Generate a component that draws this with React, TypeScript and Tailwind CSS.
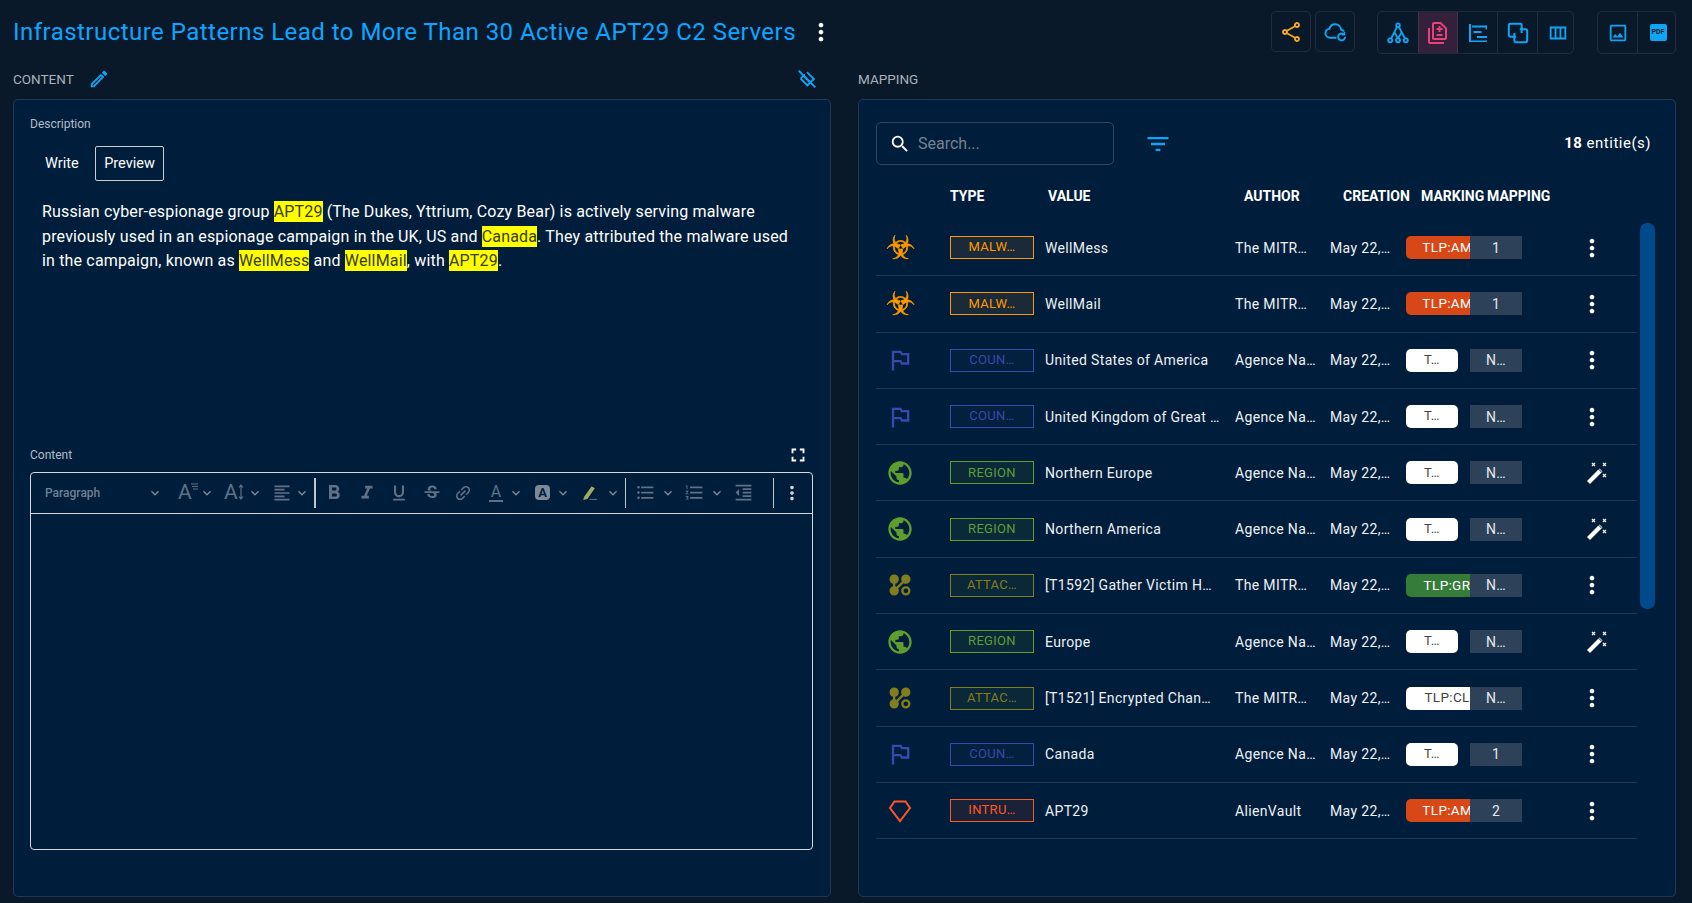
import React from "react";
import {
  MdMoreVert, MdOutlineShare, MdOutlineDifference, MdOutlineViewColumn,
  MdOutlineImage, MdOutlineEdit, MdFullscreen, MdSearch, MdFilterList, MdPublic,
  MdOutlinedFlag, MdKeyboardArrowDown, MdFormatBold, MdFormatItalic, MdFormatUnderlined, MdStrikethroughS,
  MdLink, MdFormatListBulleted, MdFormatListNumbered, MdFormatIndentDecrease, MdFormatAlignLeft,
} from "react-icons/md";
import { GiBiohazard } from "react-icons/gi";

const LockPattern = ({ className }: { className?: string }) => (
  <svg viewBox="0 0 24 24" width="28" height="28" fill="currentColor" className={className}>
    <path d="M7,3A4,4 0 0,1 11,7C11,8.86 9.73,10.43 8,10.87V13.13C8.37,13.22 8.72,13.37 9.04,13.56L13.56,9.04C13.2,8.44 13,7.75 13,7A4,4 0 0,1 17,3A4,4 0 0,1 21,7A4,4 0 0,1 17,11C16.26,11 15.57,10.8 15,10.45L10.45,15C10.8,15.57 11,16.26 11,17A4,4 0 0,1 7,21A4,4 0 0,1 3,17C3,15.14 4.27,13.57 6,13.13V10.87C4.27,10.43 3,8.86 3,7A4,4 0 0,1 7,3M17,13A4,4 0 0,1 21,17A4,4 0 0,1 17,21A4,4 0 0,1 13,17A4,4 0 0,1 17,13M17,15A2,2 0 0,0 15,17A2,2 0 0,0 17,19A2,2 0 0,0 19,17A2,2 0 0,0 17,15Z" />
  </svg>
);
const Gem = ({ className }: { className?: string }) => (
  <svg viewBox="0 0 24 24" width="24" height="24" fill="none" stroke="currentColor" strokeWidth="2" className={className}>
    <path d="M6.5 2.5H17.5L22 9L12 22L2 9Z" />
  </svg>
);
const Wand = () => (
  <svg viewBox="0 0 24 24" width="24" height="24" fill="white" className="ml-[10px]">
    <path d="M2 21.5L14.5 9L17.5 12L5 24.5Z" transform="translate(0 -1.5)" />
    <path d="M14.5 7.5l3 3" stroke="#001e3c" strokeWidth="1" transform="translate(-1 .6)" />
    <g stroke="white" strokeWidth="1.2">
      <path d="M7 2l3 3M10 2l-3 3M18 2l3 3M21 2l-3 3M18 13l3 3M21 13l-3 3" />
    </g>
  </svg>
);
const GraphIcon = () => (
  <svg viewBox="0 0 24 24" width="22" height="22" fill="none" stroke="currentColor" strokeWidth="2">
    <circle cx="12" cy="3.5" r="2" /><circle cx="3.5" cy="20" r="2.2" /><circle cx="12" cy="20" r="2.2" /><circle cx="20.5" cy="20" r="2.2" />
    <path d="M11 5.3L4.5 18M13 5.3L19.5 18M8.2 11.5L12 18M15.8 11.5L12 18" />
  </svg>
);
const CloudRefresh = () => (
  <svg viewBox="0 0 24 24" width="23" height="23" fill="none" stroke="currentColor" strokeWidth="2">
    <path d="M13 18.5H6.5C3.5 18.5 1.5 16.4 1.5 13.8C1.5 11.4 3.4 9.6 5.6 9.3C6.4 6.4 8.8 4.5 11.6 4.5C15 4.5 17.6 6.9 18 10.2C19.2 10.4 20.4 11 21 12" />
    <path d="M22 17.6A3.6 3.6 0 1 1 20.6 14.8" />
    <path d="M21.4 12.6V15.4H18.6" strokeWidth="1.4" />
  </svg>
);
const LinkedSquares = () => (
  <svg viewBox="0 0 24 24" width="22" height="22" fill="none" stroke="currentColor" strokeWidth="2.2">
    <path d="M10 16H3.5A1.5 1.5 0 0 1 2 14.5V3.5A1.5 1.5 0 0 1 3.5 2H14.5A1.5 1.5 0 0 1 16 3.5V12" />
    <path d="M14 8H20.5A1.5 1.5 0 0 1 22 9.5V20.5A1.5 1.5 0 0 1 20.5 22H9.5A1.5 1.5 0 0 1 8 20.5V12" />
  </svg>
);
const AlignBars = () => (
  <svg viewBox="0 0 18 18" width="18" height="18" fill="currentColor">
    <rect x="0" y="0" width="2" height="18" />
    <rect x="0" y="16.5" width="18" height="1.5" />
    <rect x="3" y="1.5" width="15" height="2" />
    <rect x="16.5" y="1.5" width="1.5" height="4" />
    <rect x="4.5" y="7" width="8" height="2" />
    <rect x="8" y="12" width="10" height="2" />
  </svg>
);
const LayersOff = () => (
  <svg viewBox="0 0 24 24" width="22" height="22" fill="none" stroke="currentColor" strokeWidth="2">
    <path d="M3 3L21 21" />
    <path d="M12 4.5L19.5 12L16.5 15M9.5 7L8 8.5L15.5 16" />
    <path d="M5 11.5L12.5 19L15.5 16M8 8.5L5 11.5" />
  </svg>
);

const Btn = ({ children, className = "" }: { children: React.ReactNode; className?: string }) => (
  <div className={`flex h-[41px] w-[40px] shrink-0 items-center justify-center ${className}`}>{children}</div>
);

type Row = { k: string; type: string; value: string; author: string; marking: string; mapping: string; wand?: boolean };
const rows: Row[] = [
  { k: "mal", type: "MALW…", value: "WellMess", author: "The MITR…", marking: "amber", mapping: "1" },
  { k: "mal", type: "MALW…", value: "WellMail", author: "The MITR…", marking: "amber", mapping: "1" },
  { k: "cou", type: "COUN…", value: "United States of America", author: "Agence Na…", marking: "t", mapping: "N…" },
  { k: "cou", type: "COUN…", value: "United Kingdom of Great …", author: "Agence Na…", marking: "t", mapping: "N…" },
  { k: "reg", type: "REGION", value: "Northern Europe", author: "Agence Na…", marking: "t", mapping: "N…", wand: true },
  { k: "reg", type: "REGION", value: "Northern America", author: "Agence Na…", marking: "t", mapping: "N…", wand: true },
  { k: "att", type: "ATTAC…", value: "[T1592] Gather Victim H…", author: "The MITR…", marking: "green", mapping: "N…" },
  { k: "reg", type: "REGION", value: "Europe", author: "Agence Na…", marking: "t", mapping: "N…", wand: true },
  { k: "att", type: "ATTAC…", value: "[T1521] Encrypted Chan…", author: "The MITR…", marking: "clear", mapping: "N…" },
  { k: "cou", type: "COUN…", value: "Canada", author: "Agence Na…", marking: "t", mapping: "1" },
  { k: "int", type: "INTRU…", value: "APT29", author: "AlienVault", marking: "amber", mapping: "2" },
];

const chipClass: Record<string, string> = {
  mal: "border-[#ff9800] text-[#ff9800] bg-[#1a2a38]",
  cou: "border-[#3949ab] text-[#3949ab] bg-[#04203f]",
  reg: "border-[#5d9e2f] text-[#5d9e2f] bg-[#0a2a3a]",
  att: "border-[#827d1f] text-[#827d1f] bg-[#0b2838]",
  int: "border-[#ff5722] text-[#ff5722] bg-[#1a2238]",
};

const RowIcon = ({ k }: { k: string }) => {
  if (k === "mal") return <GiBiohazard size={29} stroke="currentColor" strokeWidth={14} className="text-[#ff9800]" />;
  if (k === "cou") return <MdOutlinedFlag size={28} className="text-[#3949ab]" />;
  if (k === "reg") return <MdPublic size={28} className="text-[#5d9e2f]" />;
  if (k === "att") return <LockPattern className="text-[#827d1f]" />;
  return <Gem className="text-[#ff5722]" />;
};

const Marking = ({ m }: { m: string }) => {
  if (m === "t")
    return <div className="flex h-[23px] w-[52px] items-center justify-center rounded-[5px] bg-white text-[13px] text-[#444]">T…</div>;
  const cfg: Record<string, [string, string]> = {
    amber: ["bg-[#d84716] text-white", "TLP:AMBER"],
    green: ["bg-[#367c39] text-white", "TLP:GREEN"],
    clear: ["bg-white text-[#444]", "TLP:CLEAR"],
  };
  const [c, t] = cfg[m];
  return <div className={`flex h-[23px] w-[108px] shrink-0 items-center justify-center rounded-[5px] text-[13.5px] whitespace-nowrap ${c}`}>{t}</div>;
};

const Chev = ({ className = "" }: { className?: string }) => <MdKeyboardArrowDown size={16} className={`shrink-0 text-[#7b8a9a] ${className}`} />;

const Toolbar = () => (
  <div className="flex h-[41px] items-center border-b border-[#d5d8dc] text-[#5f7186]">
    <span className="ml-[14px] w-[102px] text-xs font-medium text-[#6f8093]">Paragraph</span>
    <Chev />
    <span className="relative ml-[15px] w-[18px] text-[21px] leading-none">
      A
      <svg viewBox="0 0 8 8" width="8" height="8" className="absolute right-[-2px] top-[1px]" stroke="#5f7186" strokeWidth="1"><path d="M1 1H8M2 3.5H8M3 6H8" /></svg>
    </span>
    <Chev className="ml-[3px]" />
    <span className="relative ml-[9px] w-[20px] text-[21px] leading-none">
      A
      <svg viewBox="0 0 6 16" width="6" height="16" className="absolute right-0 top-[2px]" fill="none" stroke="#5f7186" strokeWidth="1.2"><path d="M3 1V15M1 3.5L3 1L5 3.5M1 12.5L3 15L5 12.5" /></svg>
    </span>
    <Chev className="ml-[3px]" />
    <MdFormatAlignLeft size={20} className="ml-[9px] shrink-0" />
    <Chev className="ml-[2px]" />
    <div className="ml-[4px] h-[30px] w-[2px] shrink-0 bg-[#bfc5cc]" />
    <MdFormatBold size={24} className="ml-[6px] shrink-0" />
    <MdFormatItalic size={22} className="ml-[10px] shrink-0" />
    <MdFormatUnderlined size={20} className="ml-[11px] shrink-0" />
    <MdStrikethroughS size={20} className="ml-[13px] shrink-0" />
    <MdLink size={20} className="ml-[11px] shrink-0 -rotate-45" />
    <span className="ml-[16px] w-[14px] shrink-0 border-b-2 border-[#5f7186] text-center text-[16px] leading-[16px]">A</span>
    <Chev className="ml-[5px]" />
    <span className="ml-[11px] flex h-[15px] w-[15px] shrink-0 items-center justify-center rounded-sm bg-[#7b8a9a] text-[13px] font-bold leading-none text-[#04203f]">A</span>
    <Chev className="ml-[5px]" />
    <svg viewBox="0 0 16 16" width="17" height="17" className="ml-[10px] shrink-0">
      <path d="M3 12L10 2L13 4L6 14L2 15Z" fill="#a5a862" />
      <path d="M8 14.5H15" stroke="#5f7186" strokeWidth="1" />
    </svg>
    <Chev className="ml-[7px]" />
    <div className="ml-[4px] h-[30px] w-px shrink-0 bg-[#bfc5cc]" />
    <MdFormatListBulleted size={21} className="ml-[9px] shrink-0" />
    <Chev className="ml-[4px]" />
    <MdFormatListNumbered size={21} className="ml-[8px] shrink-0" />
    <Chev className="ml-[4px]" />
    <MdFormatIndentDecrease size={21} className="ml-[8px] shrink-0" />
    <div className="ml-[19px] h-[30px] w-px shrink-0 bg-[#bfc5cc]" />
    <MdMoreVert size={22} className="ml-[7px] shrink-0 text-[#d0d5da]" />
  </div>
);

const M = ({ children }: { children: React.ReactNode }) => <mark className="bg-[#ffff00] py-px text-[#3a3a10]">{children}</mark>;

export default function App() {
  return (
    <div className="h-[903px] w-full overflow-hidden bg-[#0a1929] pl-[13px] pr-[16px] font-[Roboto,sans-serif] text-white">
      {/* top bar */}
      <header className="flex h-[64px] items-start">
        <div className="flex h-[64px] items-center pb-[1px]">
          <h1 className="text-[24px] leading-none tracking-[0.47px] text-[#0ca5ff]">Infrastructure Patterns Lead to More Than 30 Active APT29 C2 Servers</h1>
          <MdMoreVert size={28} className="ml-[11px] text-white" />
        </div>
        <div className="ml-auto mt-[11px] flex text-[#0fa5f5]">
          <Btn className="rounded-[5px] border border-[#1f2c3b] text-[#f5a623]"><MdOutlineShare size={24} /></Btn>
          <Btn className="ml-[4px] rounded-[5px] border border-[#1f2c3b]"><CloudRefresh /></Btn>
          <div className="ml-[22px] flex w-[197px] rounded-[5px] border border-[#1f2c3b]">
            <Btn className="h-[39px]"><GraphIcon /></Btn>
            <Btn className="h-[39px] w-[39px] border-x border-[#40334a] bg-[#33203a] text-[#ec407a]"><MdOutlineDifference size={24} /></Btn>
            <Btn className="h-[39px] w-[39px] border-r border-[#1f2c3b]"><AlignBars /></Btn>
            <Btn className="h-[39px] w-[39px] border-r border-[#1f2c3b]"><LinkedSquares /></Btn>
            <Btn className="h-[39px] w-[38px]"><MdOutlineViewColumn size={22} /></Btn>
          </div>
          <div className="ml-[23px] flex w-[79px] rounded-[5px] border border-[#1f2c3b]">
            <Btn className="h-[39px] w-[39px] border-r border-[#1f2c3b]"><MdOutlineImage size={22} /></Btn>
            <Btn className="h-[39px] w-[38px]">
              <span className="flex h-[17px] w-[17px] items-center justify-center rounded-[2px] bg-[#0fa5f5] text-[7px] font-bold text-[#0a1929]">PDF</span>
            </Btn>
          </div>
        </div>
      </header>

      <div className="flex gap-[27px]">
        {/* left column */}
        <section className="w-[818px]">
          <div className="flex h-[35px] items-center pb-[5px]">
            <span className="text-[13.5px] text-[#a9b2bb]">CONTENT</span>
            <MdOutlineEdit size={22} className="ml-[14px] text-[#0fa5f5]" />
            <div className="ml-auto mr-[13px] text-[#0fa5f5]"><LayersOff /></div>
          </div>
          <div className="h-[798px] rounded-[5px] border border-[#1f3a57] bg-[#001e3c] px-[16px] pt-[16px]">
            <div className="text-xs leading-[16px] text-[#b4bcc5]">Description</div>
            <div className="mt-[14px] flex items-center pl-[13px] text-[14.5px]">
              <span className="w-[52px] pl-[2px]">Write</span>
              <span className="flex h-[35px] w-[69px] items-center justify-center rounded-[2px] border border-[#c9ced4]">Preview</span>
            </div>
            <p className="mt-[19px] w-[770px] pl-[12px] text-base leading-[24.5px] tracking-[0.165px]">
              Russian cyber-espionage group <M>APT29</M> (The Dukes, Yttrium, Cozy Bear) is actively serving malware previously used in an espionage campaign in the UK, US and <M>Canada</M>. They attributed the malware used in the campaign, known as <M>WellMess</M> and <M>WellMail</M>, with <M>APT29</M>.
            </p>
            <div className="mt-[168px] flex h-[26px] items-center">
              <span className="text-xs text-[#b4bcc5]">Content</span>
              <MdFullscreen size={22} className="ml-auto mr-[5px] text-white" />
            </div>
            <div className="mt-[4px] h-[378px] w-[783px] rounded-[4px] border border-[#d5d8dc]">
              <Toolbar />
            </div>
          </div>
        </section>

        {/* right column */}
        <section className="min-w-0 flex-1">
          <div className="flex h-[35px] items-center pb-[5px]">
            <span className="text-[13.5px] text-[#a9b2bb]">MAPPING</span>
          </div>
          <div className="relative h-[798px] rounded-[5px] border border-[#1f3a57] bg-[#001e3c] pl-[17px] pt-[22px]">
            <div className="flex items-center">
              <div className="flex h-[43px] w-[238px] items-center rounded-[5px] border border-[#2f4760] pl-[12px]">
                <MdSearch size={22} className="text-white" />
                <span className="ml-[7px] text-base text-[#75838f]">Search...</span>
              </div>
              <MdFilterList size={28} className="ml-[30px] text-[#0fa5f5]" />
              <div className="ml-auto mr-[24px] text-[15px] tracking-[0.5px]"><b className="font-bold">18</b> entitie(s)</div>
            </div>
            <div className="flex h-[55px] items-center pt-[7px] text-sm font-bold">
              <span className="ml-[74px] w-[98px]">TYPE</span>
              <span className="w-[196px]">VALUE</span>
              <span className="w-[99px]">AUTHOR</span>
              <span className="w-[78px]">CREATION</span>
              <span className="w-[66px] whitespace-nowrap">MARKING</span>
              <span>MAPPING</span>
            </div>
            <div className="w-[761px]">
              {rows.map((r, i) => (
                <div key={i} className="flex h-[56.3px] items-center border-b border-[#1b3955] text-sm tracking-[0.35px]">
                  <div className="flex w-[48px] shrink-0 justify-center"><RowIcon k={r.k} /></div>
                  <div className={`ml-[26px] flex h-[23px] w-[84px] shrink-0 items-center justify-center border text-[13px] tracking-[0.3px] ${chipClass[r.k]}`}>{r.type}</div>
                  <div className="ml-[11px] w-[190px] shrink-0 whitespace-nowrap text-[#eef1f4]">{r.value}</div>
                  <div className="w-[95px] shrink-0 whitespace-nowrap text-[#eef1f4]">{r.author}</div>
                  <div className="w-[76px] shrink-0 whitespace-nowrap text-[#eef1f4]">May 22,…</div>
                  <div className="w-[64px] shrink-0 overflow-hidden"><Marking m={r.marking} /></div>
                  <div className="flex h-[23px] w-[52px] shrink-0 items-center justify-center bg-[#2d4259] text-[#e4e8ec]">{r.mapping}</div>
                  <div className="flex w-[140px] shrink-0 justify-center">
                    {r.wand ? <Wand /> : <MdMoreVert size={28} className="text-white" />}
                  </div>
                </div>
              ))}
            </div>
            <div className="absolute left-[781px] top-[123px] h-[386px] w-[15px] rounded-[7px] bg-[#004a8c]" />
          </div>
        </section>
      </div>
    </div>
  );
}
